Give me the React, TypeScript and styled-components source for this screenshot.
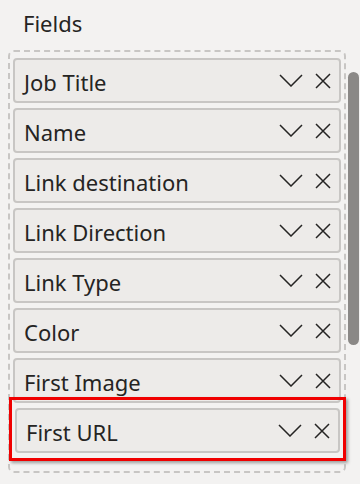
import styled, { createGlobalStyle } from "styled-components";

const GlobalStyle = createGlobalStyle`
  html, body {
    margin: 0;
    padding: 0;
    background: #f3f2f1;
  }
  body {
    font-family: "Noto Sans", "Open Sans", sans-serif;
    color: #252423;
  }
`;

const fields = [
  "Job Title",
  "Name",
  "Link destination",
  "Link Direction",
  "Link Type",
  "Color",
  "First Image",
  "First URL",
];

function Chevron() {
  return (
    <svg width="24" height="13" viewBox="0 0 24 13" fill="none">
      <path d="M1 1 L12 12 L23 1" stroke="#252423" strokeWidth="1.5" />
    </svg>
  );
}

function Cross() {
  return (
    <svg width="16" height="16" viewBox="0 0 16 16" fill="none">
      <path d="M1 1 L15 15 M15 1 L1 15" stroke="#252423" strokeWidth="1.5" />
    </svg>
  );
}

function FieldItem({ label, highlighted }: { label: string; highlighted?: boolean }) {
  return (
    <Item highlighted={highlighted}>
      <Label>{label}</Label>
      <Icons>
        <Chevron />
        <Cross />
      </Icons>
    </Item>
  );
}

export default function App() {
  return (
    <Page>
      <GlobalStyle />
      <Title>Fields</Title>
      <Body>
        <Panel>
          {fields.map((f, i) => (
            <FieldItem key={f} label={f} highlighted={i === fields.length - 1} />
          ))}
        </Panel>
        <Track>
          <Thumb />
        </Track>
      </Body>
    </Page>
  );
}

const Page = styled.div`
  width: 360px;
  height: 484px;
  overflow: hidden;
`;

const Title = styled.div`
  height: 50px;
  padding-left: 23px;
  font-size: 22px;
  line-height: 46px;
  box-sizing: border-box;
`;

const Body = styled.div`
  display: flex;
  align-items: flex-start;
`;

const Panel = styled.div`
  margin-left: 8px;
  width: 338px;
  height: 423px;
  box-sizing: border-box;
  border: 2px dashed #c8c6c4;
  border-radius: 6px;
  padding: 6px 3px 0 3px;
  display: flex;
  flex-direction: column;
  gap: 5px;
`;

const Item = styled.div<{ highlighted?: boolean }>`
  position: relative;
  height: 45px;
  box-sizing: border-box;
  background: #edebe9;
  border: 2px solid #c8c6c4;
  border-radius: 4px;
  display: flex;
  align-items: center;
  justify-content: space-between;
  padding: 0 8px 0 9px;
  margin-left: ${({ highlighted }) => (highlighted ? "2px" : "0")};
  margin-right: ${({ highlighted }) => (highlighted ? "1px" : "0")};

  ${({ highlighted }) =>
    highlighted &&
    `
    &::after {
      content: "";
      position: absolute;
      left: -8px;
      top: -13px;
      right: -8px;
      bottom: -10px;
      border: 3px solid #f00000;
      box-shadow: 2px 2px 3px rgba(0, 0, 0, 0.35);
      pointer-events: none;
    }
  `}
`;

const Label = styled.span`
  font-size: 22px;
  line-height: 1;
  margin-top: 3px;
  white-space: nowrap;
`;

const Icons = styled.div`
  display: flex;
  align-items: center;
  gap: 12px;
`;

const Track = styled.div`
  width: 14px;
  padding: 22px 1px 0 2px;
  box-sizing: border-box;
`;

const Thumb = styled.div`
  width: 11px;
  height: 273px;
  border-radius: 6px;
  background: #8a8886;
`;
